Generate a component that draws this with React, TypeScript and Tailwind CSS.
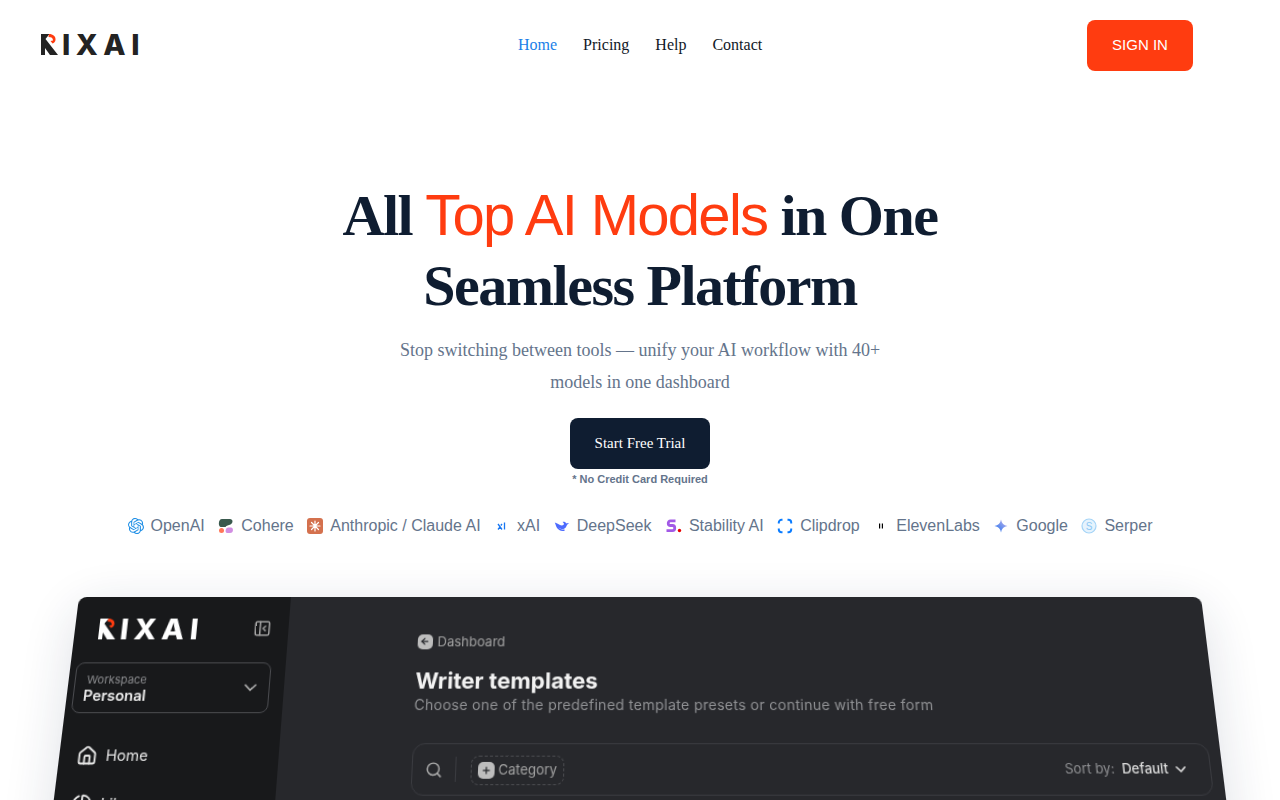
import { SiOpenai } from "react-icons/si";
import { ChevronDown, House, PanelLeftClose, Search, Plus, ArrowLeft, ChartPie } from "lucide-react";

const providers = [
  {
    name: "OpenAI",
    icon: <SiOpenai className="w-4 h-4 text-[#1f8fe6]" />,
  },
  {
    name: "Cohere",
    icon: (
      <svg className="w-4 h-4" viewBox="0 0 16 16">
        <path d="M4 1h8c3 0 3.500 4 .5 5.500-2 1-4 1-5 2.500H3C0 9 0 1 4 1z" fill="#39594d" />
        <circle cx="3.500" cy="12.500" r="2.500" fill="#ff7759" />
        <path d="M9 15c-2 0-2-5 1-5.500h3c2.500 0 3 5.500-1 5.500z" fill="#d18ee2" />
      </svg>
    ),
  },
  {
    name: "Anthropic / Claude AI",
    icon: (
      <svg className="w-4 h-4" viewBox="0 0 16 16">
        <rect width="16" height="16" rx="3" fill="#d4714e" />
        <path d="M8 3v10M3 8h10M4.500 4.500l7 7M11.500 4.500l-7 7" stroke="#fff" strokeWidth="1.200" strokeLinecap="round" />
      </svg>
    ),
  },
  {
    name: "xAI",
    icon: (
      <svg className="w-4 h-4" viewBox="0 0 16 16">
        <path d="M4 6 8 11.500M4 11.500l2-2.500M8 6 6.800 7.500M10.500 4.500V11.500" stroke="#1877f2" strokeWidth="1.300" fill="none" />
      </svg>
    ),
  },
  {
    name: "DeepSeek",
    icon: (
      <svg className="w-4 h-4" viewBox="0 0 16 16">
        <path d="M.8 4.500c1 4 3.500 6 6.500 6.500 2 .3 4-.5 5-2.500.6-1.300 1-2.500 2.900-3.500-1.300-.2-2-.1-2.700.5-1-1.500-2.500-2-4-1.500 1 .5 1.500 1.500 1 2.500-.8 1.300-2.500 1-4 .2C4 5.700 2.500 5 .8 4.500z" fill="#4d6bfe" />
        <path d="M2.500 7c1 4 4.500 6 8 5" stroke="#4d6bfe" strokeWidth="1.500" fill="none" />
        <circle cx="9" cy="6" r="0.800" fill="#fff" />
      </svg>
    ),
  },
  {
    name: "Stability AI",
    icon: (
      <svg className="w-[17px] h-4" viewBox="0 0 17 16">
        <path d="M10.500 2.800H5.500c-3 0-3 4.700 0 4.700h2c3 0 3 5.200 0 5.200H1.500" stroke="#a259e6" strokeWidth="2.800" fill="none" />
        <circle cx="14.500" cy="12.500" r="1.700" fill="#e80000" />
      </svg>
    ),
  },
  {
    name: "Clipdrop",
    icon: (
      <svg className="w-4 h-4" viewBox="0 0 16 16">
        <path d="M5.500 1.800H4.500a2.700 2.700 0 0 0-2.700 2.700V5.500M10.500 1.800h1a2.700 2.700 0 0 1 2.700 2.700V5.500M5.500 14.200h-1a2.700 2.700 0 0 1-2.700-2.700V10.500M10.500 14.200h1a2.700 2.700 0 0 0 2.700-2.700V10.500" stroke="#0a7cff" strokeWidth="2" fill="none" />
      </svg>
    ),
  },
  {
    name: "ElevenLabs",
    icon: (
      <svg className="w-4 h-4" viewBox="0 0 16 16">
        <rect x="6" y="5.500" width="1.200" height="5" fill="#000" />
        <rect x="8.800" y="5.500" width="1.200" height="5" fill="#000" />
      </svg>
    ),
  },
  {
    name: "Google",
    icon: (
      <svg className="w-4 h-4" viewBox="0 0 16 16">
        <defs>
          <linearGradient id="gem" x1="0" y1="1" x2="1" y2="0">
            <stop offset="0" stopColor="#1a6ff0" />
            <stop offset="1" stopColor="#c9b6ea" />
          </linearGradient>
        </defs>
        <path d="M8 1.500C8.500 5.200 10.800 7.500 14.500 8 10.800 8.500 8.500 10.800 8 14.500 7.500 10.800 5.200 8.500 1.500 8 5.200 7.500 7.500 5.200 8 1.500z" fill="url(#gem)" />
      </svg>
    ),
  },
  {
    name: "Serper",
    icon: (
      <svg className="w-4 h-4" viewBox="0 0 16 16">
        <circle cx="8" cy="8" r="7" fill="#e6f3fd" stroke="#a5d4f7" strokeWidth="1.200" />
        <text x="8" y="11.500" textAnchor="middle" fontSize="10" fill="#8cc8f5" fontFamily="Liberation Sans">S</text>
      </svg>
    ),
  },
];

function Logo({ dark }: { dark?: boolean }) {
  const color = dark ? "#ffffff" : "#232323";
  return (
    <div className={`flex items-center ${dark ? "text-white" : "text-[#232323]"}`}>
      <svg className="w-[17px] h-[21px] shrink-0" viewBox="0 0 17 21">
        <path d="M0 0h8.500L4.500 5 17 21H9L4 14v7H0z" fill={color} />
        <path d="M8 0c4 0 7 2.500 6.500 6-.2 2-1.500 3-3 3.500L9.500 7 12 6.500C12 4 10.500 3 7.500 3z" fill="#ff3c10" />
      </svg>
      <span className="ml-[4px] font-['Inter',sans-serif] font-extrabold text-[29px] leading-none tracking-[5.500px]">IXAI</span>
    </div>
  );
}

function Preview() {
  return (
    <div className="mx-auto w-[1122px] h-[320px] flex rounded-lg overflow-hidden origin-top [transform:perspective(1000px)_rotateX(12.5deg)] shadow-[0_10px_50px_rgba(30,41,80,0.14)] font-['Inter',sans-serif]">
      <aside className="w-[211.500px] shrink-0 bg-[#18191b] pl-1.5 pt-[22px] blur-[0.6px]">
        <div className="flex items-center justify-between pl-[18px] pr-[10px] h-5 w-[199px]">
          <Logo dark />
          <PanelLeftClose className="w-[18px] h-[18px] text-[#a3a3a3]" />
        </div>
        <div className="mt-6 w-[192px] h-[50px] rounded-lg border border-[#4a4b4f] pl-[9px] pr-2 flex items-center justify-between">
          <div>
            <p className="text-[11px] leading-[14px] text-[#8b8c8f] ml-0.5">Workspace</p>
            <p className="text-[14.500px] leading-[17px] font-semibold text-[#ececec]">Personal</p>
          </div>
          <ChevronDown className="w-5 h-5 text-[#b5b5b5]" />
        </div>
        <nav className="mt-[30px] pl-[11px] flex flex-col gap-[24px] text-[#e5e5e5] text-[14.500px]">
          <div className="flex items-center gap-2"><House className="w-5 h-5" strokeWidth={2.200} /><span>Home</span></div>
          <div className="flex items-center gap-2"><ChartPie className="w-5 h-5" strokeWidth={2.200} /><span>Library</span></div>
        </nav>
      </aside>
      <main className="flex-1 bg-[#27282c] pl-[129px] pr-[11px] pt-[37px] blur-[0.6px]">
        <div className="flex items-center gap-[5px] text-[13px] leading-4 text-[#a3a3a3]">
          <span className="w-[15px] h-[15px] rounded-[5px] bg-[#bdbdbd] flex items-center justify-center"><ArrowLeft className="w-2.5 h-2.5 text-[#27282c]" strokeWidth={3} /></span>
          Dashboard
        </div>
        <h2 className="mt-[17px] text-[22px] leading-7 font-bold text-[#f2f2f2]">Writer templates</h2>
        <p className="text-sm leading-5 text-[#8f9093] tracking-[0.26px]">Choose one of the predefined template presets or continue with free form</p>
        <div className="mt-[27px] h-[50px] rounded-xl border border-[#3a3b40] flex items-center pl-3 pr-5">
          <Search className="w-[17px] h-[17px] text-[#b0b0b0]" />
          <span className="ml-3 w-px h-6 bg-[#3a3b40]" />
          <div className="ml-3.5 mt-px h-7 px-1.5 rounded-lg border border-dashed border-[#4a4b4f] flex items-center gap-1 text-[13px] text-[#a3a3a3]">
            <span className="w-4 h-4 rounded-[5px] bg-[#bdbdbd] flex items-center justify-center"><Plus className="w-2.5 h-2.5 text-[#27282c]" strokeWidth={3} /></span>
            Category
          </div>
          <div className="ml-auto flex items-center gap-[7px] text-[13px]">
            <span className="text-[#8f9093]">Sort by:</span>
            <span className="text-[#dcdcdc] font-medium">Default</span>
            <ChevronDown className="w-4 h-4 -ml-[3px] text-[#dcdcdc]" strokeWidth={2.500} />
          </div>
        </div>
      </main>
    </div>
  );
}

export default function App() {
  return (
    <div className="h-[800px] overflow-hidden bg-white font-['Liberation_Serif',serif]">
      <header className="h-[90px] flex items-center relative">
        <div className="ml-[41px] -mt-[2px]"><Logo /></div>
        <nav className="absolute left-[518px] top-[35px] flex gap-[26px] text-base leading-[19px] text-[#111827]">
          <a className="text-[#1a7fe8]">Home</a>
          <a>Pricing</a>
          <a>Help</a>
          <a>Contact</a>
        </nav>
        <button className="ml-auto mr-[87px] w-[106px] h-[51px] pt-px rounded-lg bg-[#ff3c10] text-white text-[15px] font-['Liberation_Sans',sans-serif]">SIGN IN</button>
      </header>

      <section className="flex flex-col items-center">
        <h1 className="mt-[90px] w-[700px] text-center text-[58px] leading-[70px] font-bold text-[#0f1d31] tracking-[-1.500px]">
          All{" "}
          <span className="font-['Liberation_Sans',sans-serif] font-normal text-[#ff3c10] tracking-[-1.700px]">Top AI Models</span> in One
          <br />
          Seamless Platform
        </h1>
        <p className="mt-[13px] w-[520px] text-center text-lg leading-8 text-[#64748b]">
          Stop switching between tools — unify your AI workflow with 40+ models in one dashboard
        </p>
        <button className="mt-5 w-[140px] h-[51px] rounded-lg bg-[#0f1d31] text-white text-[15px]">Start Free Trial</button>
        <p className="mt-[2px] text-[11px] leading-4 font-bold text-[#64748b] font-['Liberation_Sans',sans-serif]">* No Credit Card Required</p>
        <div className="mt-[30px] flex items-center justify-center gap-[13.500px] font-['Liberation_Sans',sans-serif] text-base leading-[18px] text-[#64748b]">
          {providers.map((p) => (
            <div key={p.name} className="flex items-center gap-[7px]">
              {p.icon}
              <span>{p.name}</span>
            </div>
          ))}
        </div>
      </section>

      <div className="mt-[62px]">
        <Preview />
      </div>
    </div>
  );
}
